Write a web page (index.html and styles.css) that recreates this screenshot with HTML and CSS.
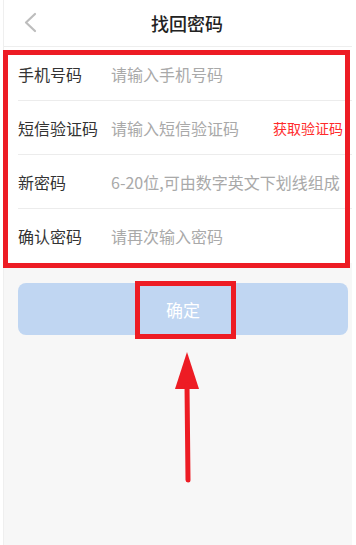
FILE: index.html
```html
<!DOCTYPE html>
<html lang="zh">
<head>
<meta charset="utf-8">
<title>找回密码</title>
<link rel="stylesheet" href="styles.css">
</head>
<body>
<div class="screen">
  <header class="topbar">
    <svg class="back" width="14" height="22" viewBox="0 0 14 22"><polyline points="11,2 2,10.5 11,19" fill="none" stroke="#bdbdbd" stroke-width="2.2" stroke-linecap="round" stroke-linejoin="round"/></svg>
    <h1 class="title">找回密码</h1>
  </header>
  <div class="form">
    <div class="row"><span class="label">手机号码</span><span class="ph">请输入手机号码</span></div>
    <div class="row"><span class="label">短信验证码</span><span class="ph">请输入短信验证码</span><span class="sms">获取验证码</span></div>
    <div class="row"><span class="label">新密码</span><span class="ph">6-20位,可由数字英文下划线组成</span></div>
    <div class="row last"><span class="label">确认密码</span><span class="ph">请再次输入密码</span></div>
  </div>
  <div class="btn">确定</div>
</div>
<div class="mark mark-form"></div>
<div class="mark mark-btn"></div>
<svg class="arrow" width="356" height="545" viewBox="0 0 356 545">
  <polygon points="187,352 175,389 199,389" fill="#ed1c24"/>
  <line x1="187" y1="385" x2="188" y2="480" stroke="#ed1c24" stroke-width="5" stroke-linecap="round"/>
</svg>
</body>
</html>
```
FILE: styles.css
```css
html, body {
  margin: 0;
  padding: 0;
  background: #ffffff;
  font-family: "Noto Sans CJK SC", "Noto Sans", sans-serif;
}
.screen {
  margin: 0 4px 0 3px;
  height: 545px;
  background: #f7f7f7;
  border-left: 1px solid #efefef;
  box-sizing: border-box;
}
.topbar {
  height: 47px;
  background: #fff;
  border-bottom: 1px solid #eeeeee;
  box-sizing: border-box;
  display: flex;
  align-items: center;
  position: relative;
}
.back {
  margin-left: 20px;
}
.title {
  margin: 0 0 0 113px;
  font-size: 18px;
  font-weight: 500;
  color: #222;
  line-height: 1;
}
.form {
  background: #fff;
  height: 216px;
}
.row {
  height: 54px;
  margin-left: 14px;
  border-bottom: 1px solid #ececec;
  box-sizing: border-box;
  display: flex;
  align-items: center;
  font-size: 16px;
}
.row.last {
  border-bottom: none;
}
.label {
  width: 93px;
  color: #333;
  flex: none;
}
.ph {
  color: #a9a9a9;
  flex: 1;
  white-space: nowrap;
}
.sms {
  color: #ff2b2b;
  font-size: 14px;
  margin-right: 9px;
}
.btn {
  margin: 20px 4px 0 14px;
  height: 52px;
  border-radius: 8px;
  background: #c0d6f2;
  color: #fff;
  font-size: 17px;
  display: flex;
  align-items: center;
  justify-content: center;
}
.mark {
  position: absolute;
  border: 5px solid #ed1c24;
  box-sizing: border-box;
}
.mark-form {
  left: 3px;
  top: 50px;
  width: 347px;
  height: 218px;
}
.mark-btn {
  left: 135px;
  top: 281px;
  width: 101px;
  height: 58px;
}
.arrow {
  position: absolute;
  left: 0;
  top: 0;
}
```
